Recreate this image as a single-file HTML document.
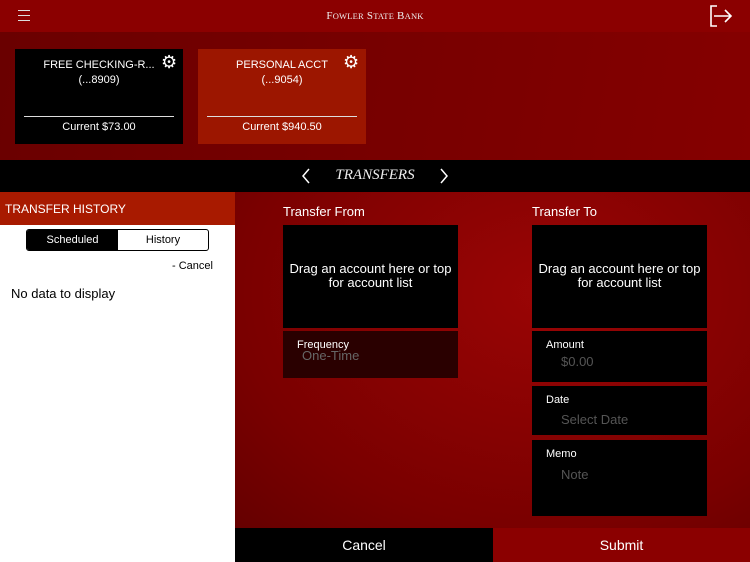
<!DOCTYPE html>
<html><head><meta charset="utf-8"><style>
*{margin:0;padding:0;box-sizing:border-box}
body{width:750px;height:562px;overflow:hidden;font-family:"Liberation Sans",Arial,sans-serif;position:relative;background:#800000}
.abs{position:absolute}
#hdr{left:0;top:0;width:750px;height:32px;background:#8b0000}
#acc{left:0;top:32px;width:750px;height:128px;background:linear-gradient(100deg,#6a0000,#7a0000 60%,#850000)}
.card{top:49px;width:168px;height:95px;color:#fff;font-size:11px;text-align:center}
.card .l{position:absolute;left:9px;right:9px;top:67px;border-top:1px solid #ddd}
#nav{left:0;top:160px;width:750px;height:32px;background:#000}
#lp{left:0;top:192px;width:235px;height:370px;background:#fff}
#lph{left:0;top:192px;width:235px;height:33px;background:#a81a00;color:#fff;font-size:12px;padding:10px 0 0 5px}
#rp{left:235px;top:192px;width:515px;height:336px;background:radial-gradient(ellipse at 60% 30%,#9a0505,#7a0000 70%,#650000)}
.box{background:#000;color:#fff}
.lab{color:#fff;font-size:13px}
.fl{font-size:11px;color:#fff;position:absolute;left:14px;top:8px}
.ph{font-size:13px;color:#555;position:absolute;left:29px;top:23px}
</style></head><body>
<div class="abs" id="hdr">
 <svg class="abs" style="left:17px;top:8px" width="14" height="14"><path d="M1 2.5H13M1 7.5H13M1 12.5H13" stroke="#ddd" stroke-width="1"/></svg>
 <div class="abs" style="left:0;width:750px;top:10px;text-align:center;color:#eee;font-family:'Liberation Serif',serif;font-size:11px;letter-spacing:.2px">F<span style="font-size:8.5px">OWLER</span> S<span style="font-size:8.5px">TATE</span> B<span style="font-size:8.5px">ANK</span></div>
 <svg class="abs" style="left:708px;top:5px" width="26" height="22" viewBox="0 0 26 22"><path d="M9 1H3V21H9M6 11H23M17 5L23 11L17 17" fill="none" stroke="#fff" stroke-width="1.6"/></svg>
</div>
<div class="abs" id="acc"></div>
<div class="abs card" style="left:15px;background:#000">
 <div style="margin-top:10px">FREE CHECKING-R...</div><div style="margin-top:3px">(...8909)</div>
 <div class="l"></div><div style="position:absolute;left:0;right:0;top:72px">Current $73.00</div>
 <div style="position:absolute;left:146px;top:3px;font-size:18px">⚙</div>
</div>
<div class="abs card" style="left:198px;background:#9c1600">
 <div style="margin-top:10px">PERSONAL ACCT</div><div style="margin-top:3px">(...9054)</div>
 <div class="l"></div><div style="position:absolute;left:0;right:0;top:72px">Current $940.50</div>
 <div style="position:absolute;left:145px;top:3px;font-size:18px">⚙</div>
</div>
<div class="abs" id="nav">
 <svg class="abs" style="left:300px;top:8px" width="12" height="16"><path d="M9 1L3 8L9 15" fill="none" stroke="#fff" stroke-width="1.5"/></svg>
 <div class="abs" style="left:0;width:750px;top:7px;text-align:center;color:#eee;font-family:'Liberation Serif',serif;font-style:italic;font-size:15px">TRANSFERS</div>
 <svg class="abs" style="left:438px;top:8px" width="12" height="16"><path d="M3 1L9 8L3 15" fill="none" stroke="#fff" stroke-width="1.5"/></svg>
</div>
<div class="abs" id="lp"></div>
<div class="abs" id="lph">TRANSFER HISTORY</div>
<div class="abs" style="left:26px;top:229px;width:183px;height:22px;border:1px solid #000;border-radius:3px;font-size:11px;display:flex;overflow:hidden">
 <div style="width:91px;background:#000;color:#fff;text-align:center;line-height:20px">Scheduled</div>
 <div style="flex:1;text-align:center;line-height:20px;color:#000">History</div>
</div>
<div class="abs" style="left:172px;top:260px;font-size:11px;color:#000">- Cancel</div>
<div class="abs" style="left:11px;top:286px;font-size:13px;color:#000">No data to display</div>
<div class="abs" id="rp"></div>
<div class="abs lab" style="left:283px;top:204px">Transfer From</div>
<div class="abs box" style="left:283px;top:225px;width:175px;height:103px;font-size:13px;text-align:center;padding-top:37px;line-height:14px">Drag an account here or top<br>for account list</div>
<div class="abs" style="left:283px;top:331px;width:175px;height:47px;background:#2a0000"><div class="fl">Frequency</div><div class="ph" style="left:19px;top:17px;color:#666">One-Time</div></div>
<div class="abs lab" style="left:532px;top:204px">Transfer To</div>
<div class="abs box" style="left:532px;top:225px;width:175px;height:103px;font-size:13px;text-align:center;padding-top:37px;line-height:14px">Drag an account here or top<br>for account list</div>
<div class="abs box" style="left:532px;top:331px;width:175px;height:51px"><div class="fl">Amount</div><div class="ph">$0.00</div></div>
<div class="abs box" style="left:532px;top:386px;width:175px;height:49px"><div class="fl">Date</div><div class="ph" style="top:26px">Select Date</div></div>
<div class="abs box" style="left:532px;top:440px;width:175px;height:76px"><div class="fl">Memo</div><div class="ph" style="top:27px">Note</div></div>
<div class="abs" style="left:235px;top:528px;width:258px;height:34px;background:#000;color:#fff;font-size:14px;text-align:center;line-height:34px">Cancel</div>
<div class="abs" style="left:493px;top:528px;width:257px;height:34px;background:#8b0000;color:#fff;font-size:14px;text-align:center;line-height:34px">Submit</div>
</body></html>
